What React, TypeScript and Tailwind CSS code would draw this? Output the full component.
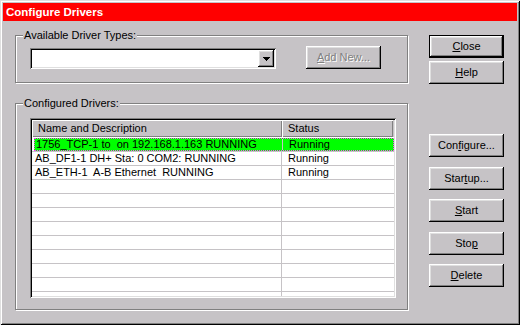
import React from "react";

const raised =
  "shadow-[inset_-1px_-1px_0_#000,inset_1px_1px_0_#fff,inset_-2px_-2px_0_#808080,inset_2px_2px_0_#dfdfdf]";
const sunken =
  "shadow-[inset_1px_1px_0_#808080,inset_-1px_-1px_0_#fff,inset_2px_2px_0_#000,inset_-2px_-2px_0_#dfdfdf]";

type Row = { name: string; status: string; selected?: boolean };

const rows: Row[] = [
  { name: "1756_TCP-1 to  on 192.168.1.163 RUNNING", status: "Running", selected: true },
  { name: "AB_DF1-1 DH+ Sta: 0 COM2: RUNNING", status: "Running" },
  { name: "AB_ETH-1  A-B Ethernet  RUNNING", status: "Running" },
  ...Array.from({ length: 9 }, () => ({ name: "", status: "" })),
];

function GroupBox({ label, className, children }: { label: string; className: string; children: React.ReactNode }) {
  return (
    <div className={`relative border border-[#808080] shadow-[inset_1px_1px_0_#fff,1px_1px_0_#fff] ${className}`}>
      <span className="absolute left-[7px] top-[-7px] bg-[#c6c3c6] px-[1px] leading-[13px]">{label}</span>
      {children}
    </div>
  );
}

function Button({ children, isDefault, className = "" }: { children: React.ReactNode; isDefault?: boolean; className?: string }) {
  return (
    <button
      className={`flex h-[23px] w-[75px] items-center justify-center pb-[1px] ${raised} ${
        isDefault ? "border border-black" : ""
      } ${className}`}
    >
      {children}
    </button>
  );
}

export default function App() {
  return (
    <div className="h-[325px] w-[520px] bg-[#c6c3c6] p-[3px] font-['Liberation_Sans',Arial,sans-serif] text-[11px] leading-[13px] text-black shadow-[inset_1px_1px_0_#dfdfdf,inset_-1px_-1px_0_#000,inset_2px_2px_0_#fff,inset_-2px_-2px_0_#808080]">
      <div className="flex h-[18px] items-center bg-[#ff0000] pl-[3px] text-[11.5px] font-bold text-white">
        Configure Drivers
      </div>

      <div className="flex pl-[12px] pt-[14px]">
        <div className="w-[393px]">
          <GroupBox label="Available Driver Types:" className="h-[48px]">
            <div className="flex items-start pl-[14px] pt-[10px]">
              <div className={`mt-[2px] flex h-[21px] w-[246px] justify-end bg-white p-[2px] ${sunken}`}>
                <div className={`flex h-[17px] w-[16px] items-center justify-center bg-[#c6c3c6] ${raised}`}>
                  <svg width="7" height="4" shapeRendering="crispEdges">
                    <rect x="0" y="0" width="7" height="1" fill="#000" />
                    <rect x="1" y="1" width="5" height="1" fill="#000" />
                    <rect x="2" y="2" width="3" height="1" fill="#000" />
                    <rect x="3" y="3" width="1" height="1" fill="#000" />
                  </svg>
                </div>
              </div>
              <Button className="ml-[30px] text-[#808080] [text-shadow:1px_1px_0_#fff]">
                <u>A</u>dd New...
              </Button>
            </div>
          </GroupBox>

          <GroupBox label="Configured Drivers:" className="mt-[20px] h-[207px]">
            <div className="pl-[14px] pt-[14px]">
              <div className={`flex h-[180px] w-[366px] flex-col bg-white p-[2px] ${sunken}`}>
                <div className="flex h-[17px] shrink-0 bg-[#c6c3c6]">
                  <div className="flex w-[250px] items-center pl-[6px] shadow-[inset_1px_1px_0_#fff,inset_-1px_-1px_0_#808080]">
                    Name and Description
                  </div>
                  <div className="flex w-[111px] items-center pl-[6px] shadow-[inset_1px_1px_0_#fff,inset_-1px_-1px_0_#808080]">
                    Status
                  </div>
                </div>
                <div className="mt-[1px] flex-1 overflow-hidden">
                  {rows.map((r, i) => (
                    <div key={i} className="flex h-[14px] border-b border-[#c6c3c6]">
                      <div
                        className={`ml-[2px] flex flex-1 whitespace-pre ${
                          r.selected ? "border border-dotted border-[#ff40ff] bg-[#00ff00]" : ""
                        }`}
                      >
                        <div className="flex w-[248px] items-center border-r border-[#c6c3c6] pl-[1px]">{r.name}</div>
                        <div className="flex flex-1 items-center pl-[6px]">{r.status}</div>
                      </div>
                    </div>
                  ))}
                </div>
              </div>
            </div>
          </GroupBox>
        </div>

        <div className="ml-[21px] flex w-[75px] flex-col">
          <Button isDefault>
            <u>C</u>lose
          </Button>
          <Button className="mt-[3px]">
            <u>H</u>elp
          </Button>
          <Button className="mt-[50px]">
            Con<u>f</u>igure...
          </Button>
          <Button className="mt-[10px]">
            Star<u>t</u>up...
          </Button>
          <Button className="mt-[9px]">
            <u>S</u>tart
          </Button>
          <Button className="mt-[10px]">
            Sto<u>p</u>
          </Button>
          <Button className="mt-[9px]">
            <u>D</u>elete
          </Button>
        </div>
      </div>
    </div>
  );
}
